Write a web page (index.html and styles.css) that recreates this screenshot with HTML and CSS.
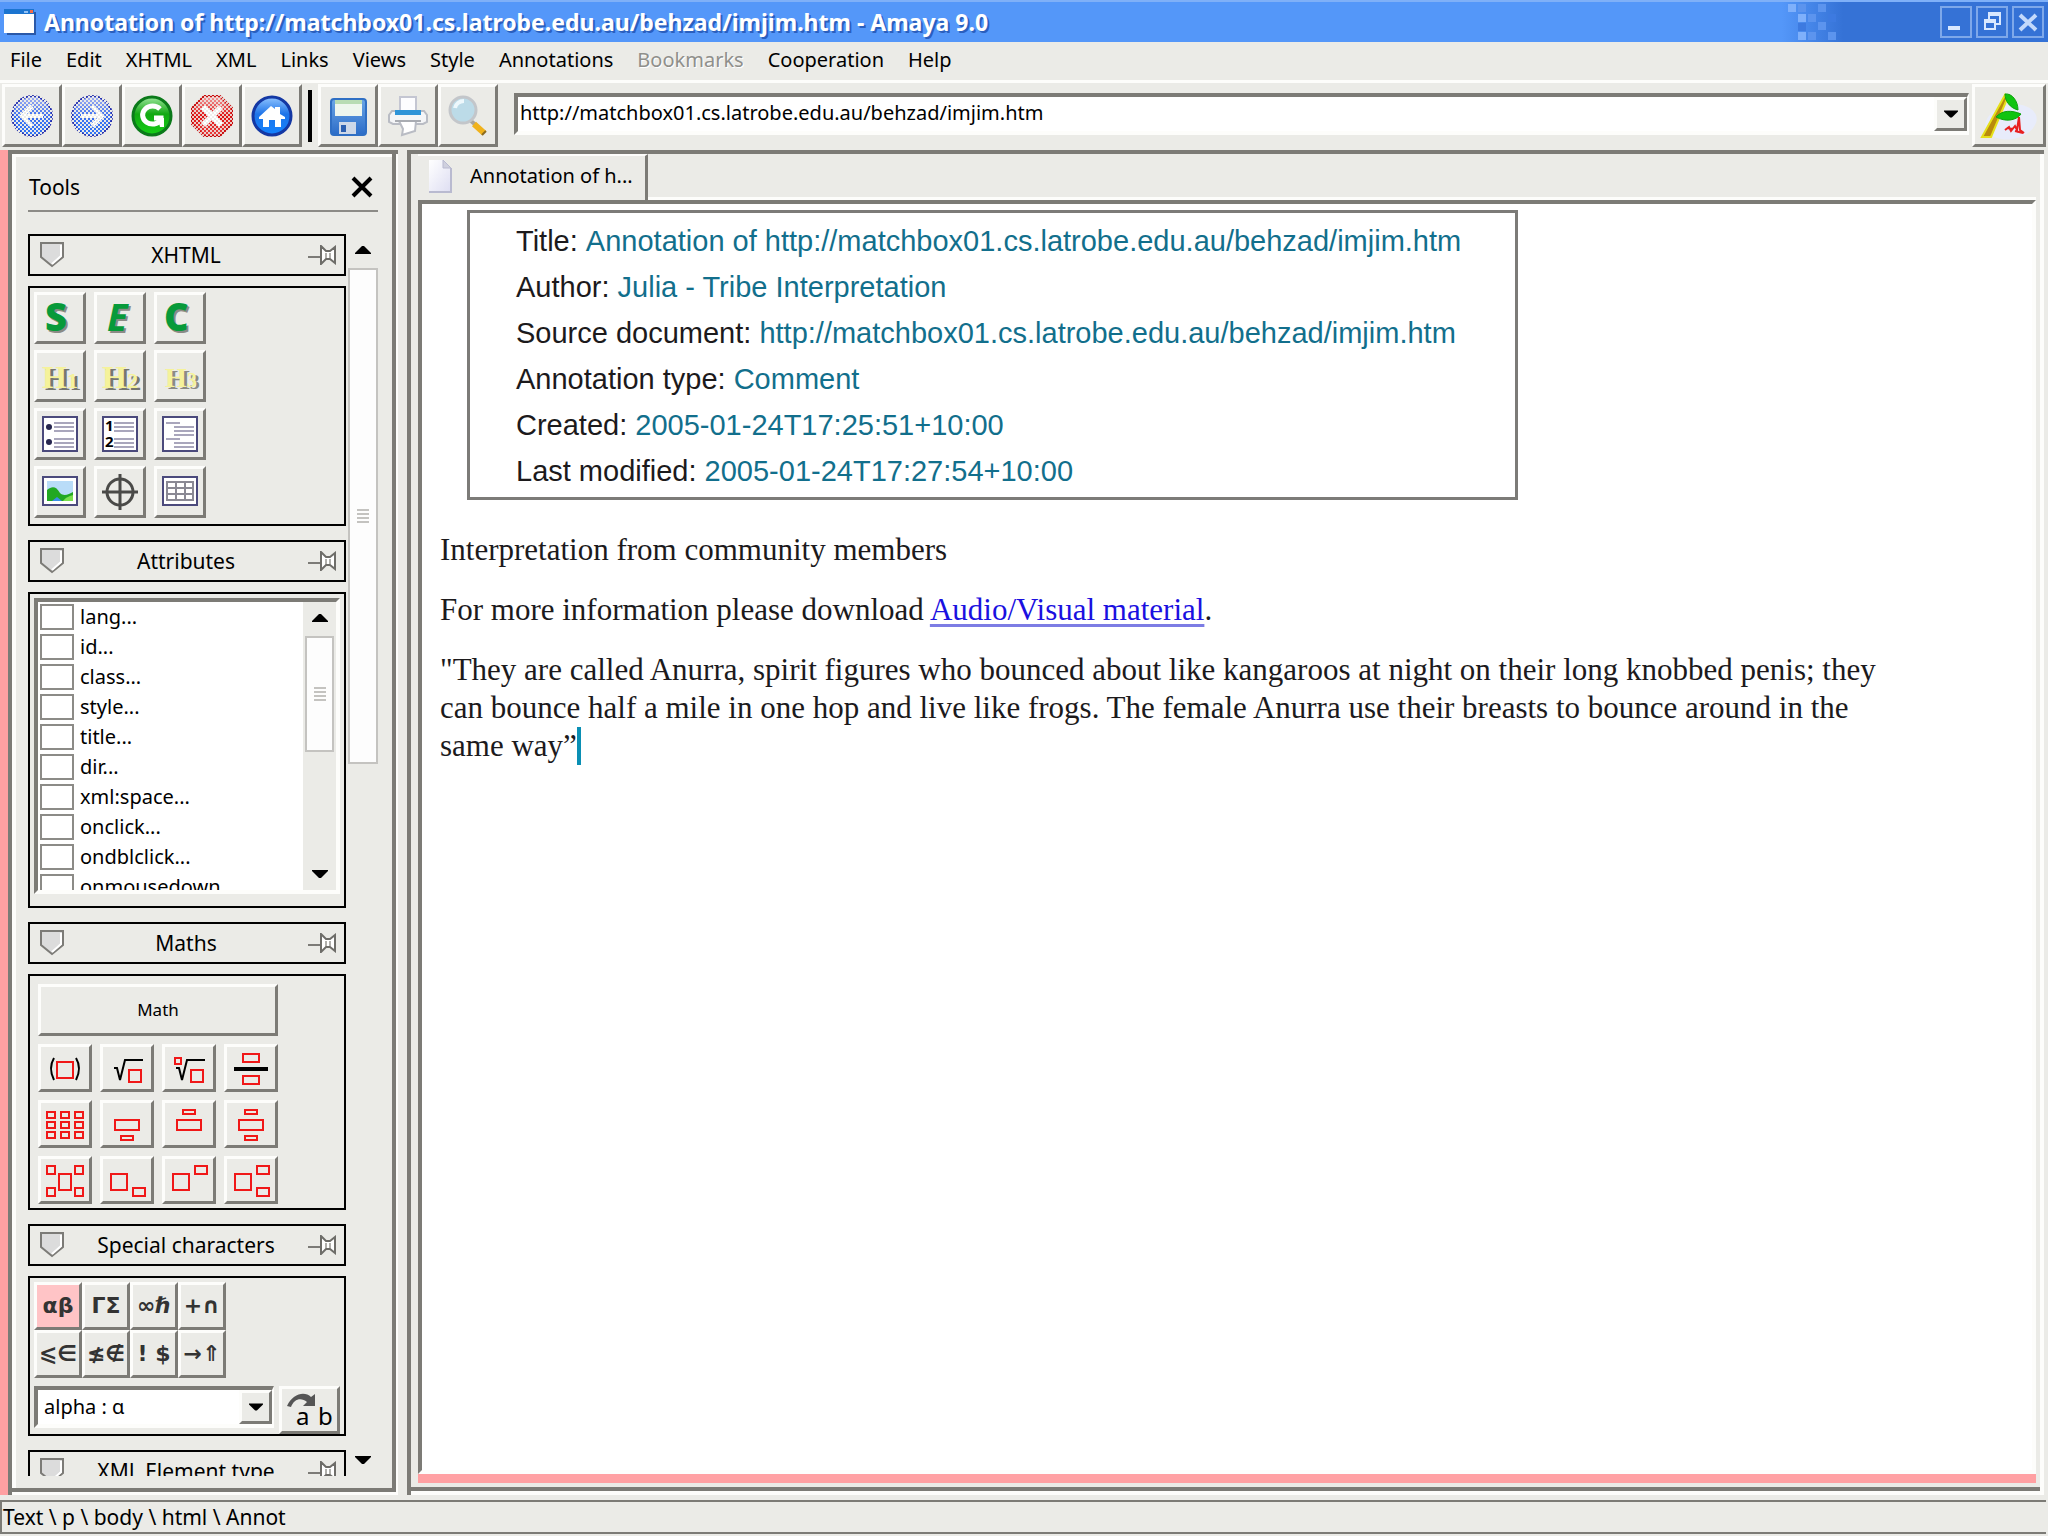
FILE: index.html
```html
<!DOCTYPE html>
<html lang="en">
<head>
<meta charset="utf-8">
<title>Annotation of http://matchbox01.cs.latrobe.edu.au/behzad/imjim.htm - Amaya 9.0</title>
<link rel="stylesheet" href="styles.css">
</head>
<body>
<svg class="defs" width="0" height="0" aria-hidden="true">
  <defs>
    <linearGradient id="blue" x1="0" y1="0" x2="0" y2="1"><stop offset="0" stop-color="#8fc4ff"/><stop offset=".45" stop-color="#1f74e8"/><stop offset="1" stop-color="#1283ff"/></linearGradient>
    <linearGradient id="green" x1="0" y1="0" x2="0" y2="1"><stop offset="0" stop-color="#9be69b"/><stop offset=".45" stop-color="#12a812"/><stop offset="1" stop-color="#16d016"/></linearGradient>
    <linearGradient id="palered" x1="0" y1="0" x2="0" y2="1"><stop offset="0" stop-color="#f2a3a3"/><stop offset=".5" stop-color="#e01010"/><stop offset="1" stop-color="#e84040"/></linearGradient>
    <linearGradient id="paleblue" x1="0" y1="0" x2="0" y2="1"><stop offset="0" stop-color="#a9b4f0"/><stop offset=".5" stop-color="#3d6ff0"/><stop offset="1" stop-color="#2f74f4"/></linearGradient>
    <linearGradient id="disk" x1="0" y1="0" x2="0" y2="1"><stop offset="0" stop-color="#6ba6e6"/><stop offset="1" stop-color="#2b6cc8"/></linearGradient>
    <linearGradient id="sheet" x1="0" y1="0" x2="1" y2="1"><stop offset="0" stop-color="#ffffff"/><stop offset="1" stop-color="#dedef2"/></linearGradient>
    <pattern id="dither" width="4" height="4" patternUnits="userSpaceOnUse"><rect width="2" height="2" fill="#ebebe7"/><rect x="2" y="2" width="2" height="2" fill="#ebebe7"/></pattern>
    <symbol id="fold" viewBox="0 0 24 26"><path d="M1 1h22v14L12 24 1 15z" fill="#dcdcdc" stroke="#7c7b77" stroke-width="2"/><path d="M21 3v11l-9 8" fill="none" stroke="#fff" stroke-width="2"/></symbol>
    <symbol id="pin" viewBox="0 0 28 20"><path d="M0 12h13" stroke="#7c7b77" stroke-width="2"/><path d="M13 1l5 5h4l5-4v16l-5-4h-4l-5 5z" fill="#fff" stroke="#6e6d69" stroke-width="2"/><path d="M18 8v5M22 8v5" stroke="#b0afab" stroke-width="2"/></symbol>
    <symbol id="up" viewBox="0 0 16 8"><path d="M0 8V7L7 0h2l7 7v1z" fill="#000"/></symbol>
    <symbol id="down" viewBox="0 0 16 8"><path d="M0 0v1l7 7h2l7-7V0z" fill="#000"/></symbol>
  </defs>
</svg>

<div class="window">
  <header class="titlebar">
    <svg class="app-icon" width="32" height="26" viewBox="0 0 32 26" aria-hidden="true"><path d="M3 25h28V3" fill="none" stroke="#2a58a8" stroke-width="2"/><rect width="30" height="24" fill="#fff"/><rect width="30" height="5" fill="#1b74d0"/><rect x="26" y="1" width="3" height="3" fill="#f26a4a"/><rect x="20" y="2" width="4" height="2" fill="#8fc0f4"/></svg>
    <h1 class="title">Annotation of http://matchbox01.cs.latrobe.edu.au/behzad/imjim.htm - Amaya 9.0</h1>
    <svg class="pixels" width="54" height="40" viewBox="0 0 54 40" aria-hidden="true"><g fill="#7fb0fb"><path d="M0 2h8v8H0zM10 12h8v8h-8zM10 30h8v8h-8z"/></g><g fill="#5c94ee"><path d="M10 2h8v8h-8zM20 12h8v8h-8zM30 20h8v8h-8zM20 30h8v8h-8zM40 30h8v8h-8zM30 2h8v8h-8z"/></g><path d="M40 12h8v8h-8zM10 21h8v8h-8z" fill="#3d7ae0"/></svg>
    <div class="window-buttons">
      <button type="button" aria-label="Minimize"><svg width="28" height="28" viewBox="0 0 28 28"><path d="M6 20h12" stroke="#d9e8ff" stroke-width="4"/></svg></button>
      <button type="button" aria-label="Restore"><svg width="28" height="28" viewBox="0 0 28 28"><path d="M11 11V6h11v10h-4" fill="none" stroke="#d9e8ff" stroke-width="2"/><path d="M10 6h13" stroke="#d9e8ff" stroke-width="4"/><path d="M7 12h10v9H7z" fill="none" stroke="#d9e8ff" stroke-width="2"/><path d="M6 13h12" stroke="#d9e8ff" stroke-width="4"/></svg></button>
      <button type="button" aria-label="Close"><svg width="28" height="28" viewBox="0 0 28 28"><path d="M6 7l16 15M22 7L6 22" stroke="#c3d9fb" stroke-width="4"/></svg></button>
    </div>
  </header>

  <nav class="menubar" aria-label="Main menu">
    <button type="button">File</button><button type="button">Edit</button><button type="button">XHTML</button><button type="button">XML</button><button type="button">Links</button><button type="button">Views</button><button type="button">Style</button><button type="button">Annotations</button><button type="button" disabled>Bookmarks</button><button type="button">Cooperation</button><button type="button">Help</button>
  </nav>

  <div class="toolbar">
    <div class="tool-group">
      <button type="button" class="raised" aria-label="Back"><svg width="44" height="44" viewBox="0 0 44 44"><circle cx="22" cy="22" r="20" fill="url(#paleblue)" stroke="#2b35b0" stroke-width="2"/><path d="M33 22H13M22 12L12 22l10 10" fill="none" stroke="#fff" stroke-width="4"/><rect width="44" height="44" fill="url(#dither)"/></svg></button>
      <button type="button" class="raised" aria-label="Forward"><svg width="44" height="44" viewBox="0 0 44 44"><circle cx="22" cy="22" r="20" fill="url(#paleblue)" stroke="#2b35b0" stroke-width="2"/><path d="M11 22h20M22 12l10 10-10 10" fill="none" stroke="#fff" stroke-width="4"/><rect width="44" height="44" fill="url(#dither)"/></svg></button>
      <button type="button" class="raised" aria-label="Reload"><svg width="44" height="44" viewBox="0 0 44 44"><circle cx="22" cy="22" r="19" fill="url(#green)" stroke="#0b7a1a" stroke-width="3"/><path d="M30 15a10 9 0 1 0 1 11v-2h-7" fill="none" stroke="#fff" stroke-width="5"/><path d="M28 24h6v9h-4z" fill="#fff"/></svg></button>
      <button type="button" class="raised" aria-label="Stop"><svg width="44" height="44" viewBox="0 0 44 44"><path d="M14 2h16l12 12v16L30 42H14L2 30V14z" fill="url(#palered)" stroke="#c80d0d" stroke-width="2"/><path d="M13 13l18 18M31 13L13 31" stroke="#fff" stroke-width="6"/><rect width="44" height="44" fill="url(#dither)" opacity=".85"/></svg></button>
      <button type="button" class="raised" aria-label="Home"><svg width="44" height="44" viewBox="0 0 44 44"><circle cx="22" cy="22" r="19" fill="url(#blue)" stroke="#1438a4" stroke-width="3"/><path d="M9 23L21 12l4 3v-2h5v7l5 3v2h-4v8h-6v-7h-6v7h-6v-8H9z" fill="#fff"/></svg></button>
    </div>
    <span class="separator"></span>
    <div class="tool-group">
      <button type="button" class="raised" aria-label="Save"><svg width="44" height="44" viewBox="0 0 44 44"><rect x="5" y="5" width="35" height="36" rx="3" fill="url(#disk)" stroke="#2f6fc4" stroke-width="2"/><path d="M9 6h27v16H9z" fill="#eef6ee"/><path d="M9 6h27v4H9z" fill="#b8dcb4"/><path d="M13 28h17v12H13z" fill="#cdd8e8"/><path d="M15 31h5v7h-5z" fill="#2b5fb0"/></svg></button>
      <button type="button" class="raised" aria-label="Print"><svg width="44" height="44" viewBox="0 0 44 44"><path d="M14 3h16v16H14z" fill="#fdfdff" stroke="#c4c6d2" stroke-width="2"/><path d="M6 17h32l3 4v7l-4 2H7l-4-2v-7z" fill="#f4f5f7" stroke="#b9bcc4" stroke-width="2"/><path d="M9 16h26v5H9z" fill="#2f94d8"/><path d="M13 27h17l-1 10-13 4 1-6z" fill="#fff" stroke="#b9bcc4" stroke-width="2"/><path d="M9 27h26" stroke="#a9acb2" stroke-width="2"/></svg></button>
      <button type="button" class="raised" aria-label="Find"><svg width="44" height="44" viewBox="0 0 44 44"><path d="M25 27l6 5" stroke="#a8a49c" stroke-width="4"/><path d="M28 30l10 9" stroke="#f0b21c" stroke-width="6"/><path d="M36 41l4-4" stroke="#8a6a20" stroke-width="2"/><circle cx="17" cy="16" r="13" fill="#bcdbe8" stroke="#c3c6ca" stroke-width="3"/><path d="M9 14a9 8 0 0 1 9-7" fill="none" stroke="#eef8fc" stroke-width="4"/></svg></button>
    </div>
    <div class="combo address">
      <input type="text" aria-label="Address" value="http://matchbox01.cs.latrobe.edu.au/behzad/imjim.htm">
      <button type="button" class="raised drop" aria-label="Show addresses"><svg width="14" height="8"><use href="#down"/></svg></button>
    </div>
    <button type="button" class="raised amaya" aria-label="Amaya"><svg width="60" height="52" viewBox="0 0 60 52"><ellipse cx="32" cy="32" rx="26" ry="17" fill="#e8ecfb" transform="rotate(-12 32 32)"/><path d="M26 5L3 47h9L28 9z" fill="#b98a0c" stroke="#e6e01a" stroke-width="2"/><path d="M26 4c7-1 13 7 13 16C31 18 26 11 26 4zM17 27c6-7 16-7 25-3-5 7-16 8-25 3z" fill="#10c410" stroke="#0da00d"/><path d="M26 40l4-3 2 4 4-5 2 4 2-13 1 13 4 3M28 38l6 1M36 41l8 2" fill="none" stroke="#e82020" stroke-width="2"/></svg></button>
  </div>

  <div class="workspace">
    <aside class="tools">
      <div class="tools-head"><h2>Tools</h2><button type="button" aria-label="Close tools"><svg width="22" height="22" viewBox="0 0 22 22"><path d="M2 2l18 18M20 2L2 20" stroke="#000" stroke-width="4"/></svg></button></div>
      <div class="tools-body">
        <div class="panels">
          <section class="panel">
            <header class="panel-head"><button type="button" aria-label="Fold XHTML"><svg width="24" height="26"><use href="#fold"/></svg></button><h3>XHTML</h3><button type="button" aria-label="Detach XHTML"><svg width="28" height="20"><use href="#pin"/></svg></button></header>
            <div class="panel-box xhtml">
              <button type="button" class="raised" aria-label="Strong"><svg width="44" height="44" viewBox="0 0 44 44" class="glyph heavy"><text x="9" y="37" fill="#8b8b86">S</text><text x="7" y="35" fill="#079a3a">S</text></svg></button>
              <button type="button" class="raised" aria-label="Emphasis"><svg width="44" height="44" viewBox="0 0 44 44" class="glyph heavy slant"><text x="11" y="37" fill="#8b8b86">E</text><text x="9" y="35" fill="#079a3a">E</text></svg></button>
              <button type="button" class="raised" aria-label="Code"><svg width="44" height="44" viewBox="0 0 44 44" class="glyph heavy"><text x="8" y="37" fill="#8b8b86">C</text><text x="6" y="35" fill="#079a3a">C</text></svg></button>
              <button type="button" class="raised" aria-label="Heading 1"><svg width="44" height="44" viewBox="0 0 44 44" class="glyph head"><text x="7" y="36" fill="#77776f">H<tspan class="sub">1</tspan></text><text x="4" y="34" fill="#f5f29a">H<tspan class="sub">1</tspan></text></svg></button>
              <button type="button" class="raised" aria-label="Heading 2"><svg width="44" height="44" viewBox="0 0 44 44" class="glyph head"><text x="7" y="36" fill="#77776f">H<tspan class="sub">2</tspan></text><text x="4" y="34" fill="#f5f29a">H<tspan class="sub">2</tspan></text></svg></button>
              <button type="button" class="raised" aria-label="Heading 3"><svg width="44" height="44" viewBox="0 0 44 44" class="glyph head small"><text x="10" y="35" fill="#8b8b84">H<tspan class="sub">3</tspan></text><text x="7" y="33" fill="#f5f29a">H<tspan class="sub">3</tspan></text></svg></button>
              <button type="button" class="raised" aria-label="Bulleted list"><svg width="44" height="44" viewBox="0 0 44 44"><path d="M5 5h34v34H5z" fill="#fff" stroke="#4b4a7c" stroke-width="2"/><path d="M16 11h20M16 15h20M16 19h20M16 27h20M16 31h20M16 35h20" stroke="#a9a6bc" stroke-width="2"/><circle cx="11" cy="15" r="3" fill="#26264e"/><circle cx="11" cy="30" r="3" fill="#26264e"/></svg></button>
              <button type="button" class="raised" aria-label="Numbered list"><svg width="44" height="44" viewBox="0 0 44 44" class="glyph tiny"><path d="M5 5h34v34H5z" fill="#fff" stroke="#4b4a7c" stroke-width="2"/><path d="M16 11h20M16 15h20M16 19h20M16 27h20M16 31h20M16 35h20" stroke="#a9a6bc" stroke-width="2"/><text x="7" y="19">1</text><text x="7" y="35">2</text></svg></button>
              <button type="button" class="raised" aria-label="Definition list"><svg width="44" height="44" viewBox="0 0 44 44"><path d="M5 5h34v34H5z" fill="#fff" stroke="#4b4a7c" stroke-width="2"/><path d="M8 11h14M16 15h20M16 19h20M16 23h20M8 27h14M16 31h20M16 35h20" stroke="#a9a6bc" stroke-width="2"/></svg></button>
              <button type="button" class="raised" aria-label="Image"><svg width="44" height="44" viewBox="0 0 44 44"><path d="M5 7h34v28H5z" fill="#fff" stroke="#4b4a7c" stroke-width="2"/><path d="M9 11h26v20H9z" fill="#b9dcf8"/><path d="M9 31V20c5-4 9-4 13 3 4 4 9 1 13-1v9z" fill="#22a822"/><path d="M14 31l5-4 5 4z" fill="#3a8fe8"/><path d="M25 31c3-4 7-5 10-6v6z" fill="#7be04e"/></svg></button>
              <button type="button" class="raised" aria-label="Target"><svg width="44" height="44" viewBox="0 0 44 44"><circle cx="22" cy="22" r="13" fill="none" stroke="#4a4a48" stroke-width="3"/><path d="M22 4v36M4 22h36" stroke="#4a4a48" stroke-width="3"/></svg></button>
              <button type="button" class="raised" aria-label="Table"><svg width="44" height="44" viewBox="0 0 44 44"><path d="M5 7h34v28H5z" fill="#fff" stroke="#4b4a7c" stroke-width="2"/><path d="M9 12h26v18H9zM9 18h26M9 24h26M18 12v18M27 12v18" fill="none" stroke="#8a8994" stroke-width="2"/></svg></button>
            </div>
          </section>

          <section class="panel">
            <header class="panel-head"><button type="button" aria-label="Fold Attributes"><svg width="24" height="26"><use href="#fold"/></svg></button><h3>Attributes</h3><button type="button" aria-label="Detach Attributes"><svg width="28" height="20"><use href="#pin"/></svg></button></header>
            <div class="panel-box attributes">
              <div class="attr-frame">
                <div class="attr-list">
                  <label><input type="checkbox">lang...</label>
                  <label><input type="checkbox">id...</label>
                  <label><input type="checkbox">class...</label>
                  <label><input type="checkbox">style...</label>
                  <label><input type="checkbox">title...</label>
                  <label><input type="checkbox">dir...</label>
                  <label><input type="checkbox">xml:space...</label>
                  <label><input type="checkbox">onclick...</label>
                  <label><input type="checkbox">ondblclick...</label>
                  <label><input type="checkbox">onmousedown</label>
                </div>
                <div class="scrollbar">
                  <svg width="16" height="8"><use href="#up"/></svg>
                  <div class="track"><div class="thumb short"><span class="grip"></span></div></div>
                  <svg width="16" height="8"><use href="#down"/></svg>
                </div>
              </div>
            </div>
          </section>

          <section class="panel">
            <header class="panel-head"><button type="button" aria-label="Fold Maths"><svg width="24" height="26"><use href="#fold"/></svg></button><h3>Maths</h3><button type="button" aria-label="Detach Maths"><svg width="28" height="20"><use href="#pin"/></svg></button></header>
            <div class="panel-box maths">
              <button type="button" class="raised wide">Math</button>
              <button type="button" class="raised" aria-label="Parentheses"><svg width="46" height="40" viewBox="0 0 46 40"><path d="M12 10q-6 10 0 22M34 10q6 10 0 22" fill="none" stroke="#000" stroke-width="2"/><path d="M15 14h16v16H15z"/></svg></button>
              <button type="button" class="raised" aria-label="Square root"><svg width="46" height="40" viewBox="0 0 46 40"><path d="M10 20h3l3 12 5-20h18" fill="none" stroke="#000" stroke-width="2"/><path d="M25 22h12v12H25z"/></svg></button>
              <button type="button" class="raised" aria-label="Root"><svg width="46" height="40" viewBox="0 0 46 40"><path d="M10 20h3l3 12 5-20h18" fill="none" stroke="#000" stroke-width="2"/><path d="M25 22h12v12H25zM9 10h6v6H9z"/></svg></button>
              <button type="button" class="raised" aria-label="Fraction"><svg width="46" height="40" viewBox="0 0 46 40"><path d="M6 21h34" stroke="#000" stroke-width="4"/><path d="M15 6h16v8H15zM15 28h16v8H15z"/></svg></button>
              <button type="button" class="raised" aria-label="Matrix"><svg width="46" height="40" viewBox="0 0 46 40"><path d="M5 8h8v6H5zM19 8h8v6h-8zM33 8h8v6h-8zM5 18h8v6H5zM19 18h8v6h-8zM33 18h8v6h-8zM5 28h8v6H5zM19 28h8v6h-8zM33 28h8v6h-8z"/></svg></button>
              <button type="button" class="raised" aria-label="Under"><svg width="46" height="40" viewBox="0 0 46 40"><path d="M11 16h24v10H11zM17 32h12v4H17z"/></svg></button>
              <button type="button" class="raised" aria-label="Over"><svg width="46" height="40" viewBox="0 0 46 40"><path d="M11 16h24v10H11zM17 6h12v4H17z"/></svg></button>
              <button type="button" class="raised" aria-label="Under and over"><svg width="46" height="40" viewBox="0 0 46 40"><path d="M11 16h24v10H11zM17 6h12v4H17zM17 32h12v4H17z"/></svg></button>
              <button type="button" class="raised" aria-label="Multiscripts"><svg width="46" height="40" viewBox="0 0 46 40"><path d="M17 14h12v16H17zM5 6h8v8H5zM33 6h8v8h-8zM5 28h8v8H5zM33 28h8v8h-8z"/></svg></button>
              <button type="button" class="raised" aria-label="Subscript"><svg width="46" height="40" viewBox="0 0 46 40"><path d="M7 14h16v16H7zM29 28h12v8H29z"/></svg></button>
              <button type="button" class="raised" aria-label="Superscript"><svg width="46" height="40" viewBox="0 0 46 40"><path d="M7 14h16v16H7zM29 6h12v8H29z"/></svg></button>
              <button type="button" class="raised" aria-label="Subscript and superscript"><svg width="46" height="40" viewBox="0 0 46 40"><path d="M7 14h16v16H7zM29 6h12v8H29zM29 28h12v8H29z"/></svg></button>
            </div>
          </section>

          <section class="panel">
            <header class="panel-head"><button type="button" aria-label="Fold Special characters"><svg width="24" height="26"><use href="#fold"/></svg></button><h3>Special characters</h3><button type="button" aria-label="Detach Special characters"><svg width="28" height="20"><use href="#pin"/></svg></button></header>
            <div class="panel-box special">
              <div class="char-grid">
                <button type="button" class="raised chosen">αβ</button><button type="button" class="raised">ΓΣ</button><button type="button" class="raised">∞ℏ</button><button type="button" class="raised">+∩</button>
                <button type="button" class="raised">⩽∈</button><button type="button" class="raised">≰∉</button><button type="button" class="raised">! $</button><button type="button" class="raised">→⇑</button>
              </div>
              <div class="char-row">
                <div class="combo">
                  <select aria-label="Character"><option>alpha : α</option></select>
                  <span class="raised drop" aria-hidden="true"><svg width="14" height="8"><use href="#down"/></svg></span>
                </div>
                <button type="button" class="raised" aria-label="Change character"><svg width="54" height="42" viewBox="0 0 54 42" class="glyph plain"><path d="M4 17C10 4 22 2 28 8l4-3v12H20l4-4C18 8 11 10 8 18z" fill="#555"/><text x="13" y="36">a</text><text x="35" y="36">b</text></svg></button>
              </div>
            </div>
          </section>

          <section class="panel">
            <header class="panel-head"><button type="button" aria-label="Fold XML Element type"><svg width="24" height="26"><use href="#fold"/></svg></button><h3>XML Element type</h3><button type="button" aria-label="Detach XML Element type"><svg width="28" height="20"><use href="#pin"/></svg></button></header>
          </section>
        </div>
        <div class="scrollbar">
          <svg width="16" height="8"><use href="#up"/></svg>
          <div class="track"><div class="thumb long"><span class="grip"></span></div></div>
          <svg width="16" height="8"><use href="#down"/></svg>
        </div>
      </div>
    </aside>

    <main class="document">
      <div class="tabs">
        <button type="button" class="tab"><svg width="24" height="34" viewBox="0 0 24 34"><path d="M1 1h15l7 8v24H1z" fill="url(#sheet)"/><path d="M23 9v24H1" fill="none" stroke="#b9bad0" stroke-width="2"/><path d="M15 1v8h8z" fill="#cfd0de" stroke="#b9bad0"/></svg>Annotation of h...</button>
        <div class="tab-rest"></div>
      </div>
      <article class="page">
        <dl class="meta">
          <div><dt>Title:</dt> <dd>Annotation of http://matchbox01.cs.latrobe.edu.au/behzad/imjim.htm</dd></div>
          <div><dt>Author:</dt> <dd>Julia - Tribe Interpretation</dd></div>
          <div><dt>Source document:</dt> <dd>http://matchbox01.cs.latrobe.edu.au/behzad/imjim.htm</dd></div>
          <div><dt>Annotation type:</dt> <dd>Comment</dd></div>
          <div><dt>Created:</dt> <dd>2005-01-24T17:25:51+10:00</dd></div>
          <div><dt>Last modified:</dt> <dd>2005-01-24T17:27:54+10:00</dd></div>
        </dl>
        <p>Interpretation from community members</p>
        <p>For more information please download <a href="#">Audio/Visual material</a>.</p>
        <p>"They are called Anurra, spirit figures who bounced about like kangaroos at night on their long knobbed penis; they can bounce half a mile in one hop and live like frogs. The female Anurra use their breasts to bounce around in the same way”<span class="caret"></span></p>
      </article>
      <div class="save-line"></div>
    </main>
  </div>

  <footer class="status">Text \ p \ body \ html \ Annot</footer>
</div>
</body>
</html>
```
FILE: styles.css
```css
:root {
  --face: #ebebe7;
  --dark: #7c7b76;
  --light: #fdfdfb;
  --pink: #ffa0a2;
}

* { box-sizing: border-box; }

body {
  margin: 0;
  background: var(--face);
  color: #000;
  font: 20px/28px "Noto Sans", "Open Sans", sans-serif;
}

button, input, select { font: inherit; color: inherit; margin: 0; }
button { padding: 0; border: 0; background: none; }
svg { display: block; flex: none; }
.defs { position: absolute; }
h1, h2, h3, p, dl, dd { margin: 0; font-weight: normal; font-size: inherit; }

.window { display: flex; flex-direction: column; height: 100vh; }

/* Title bar */
.titlebar {
  display: flex;
  align-items: center;
  flex: none;
  height: 42px;
  padding: 0 4px;
  background: linear-gradient(90deg, #5497f9 0, #5497f9 87%, #3572d6 90%);
  border-top: 2px solid #7fb0f8;
  color: #fff;
}
.title {
  flex: 1;
  margin-left: 8px;
  font-size: 23px;
  font-weight: bold;
  text-shadow: 2px 2px 0 #2a5fbe;
  white-space: nowrap;
}
.pixels { margin-right: 98px; }
.window-buttons { display: flex; gap: 4px; }
.window-buttons button { border: 2px solid #7ea8ea; }

/* Menu bar */
.menubar {
  display: flex;
  flex: none;
  gap: 24px;
  height: 41px;
  padding: 0 10px 2px;
  border-bottom: 3px solid var(--light);
}
.menubar button:disabled { color: #8f8f8b; text-shadow: 1px 1px 0 #fff; }

/* Toolbar */
.raised {
  display: flex;
  align-items: center;
  justify-content: center;
  border: solid;
  border-width: 3px;
  border-color: var(--light) var(--dark) var(--dark) var(--light);
  background: var(--face);
}
.toolbar {
  display: flex;
  flex: none;
  align-items: center;
  height: 67px;
  padding: 0 2px 2px;
}
.tool-group { display: flex; }
.tool-group .raised { width: 60px; height: 63px; }
.separator { width: 4px; height: 52px; margin: 0 6px; background: #000; }
.combo {
  display: flex;
  position: relative;
  flex: 1;
  height: 42px;
  border: 4px solid;
  border-color: var(--dark) var(--light) var(--light) var(--dark);
  border-right-width: 2px;
  background: #fff;
}
.combo input, .combo select {
  flex: 1;
  min-width: 0;
  padding: 0 2px 2px;
  border: 0;
  background: none;
  appearance: none;
}
.combo .drop { width: 33px; height: 34px; }
.combo select { padding: 0 6px; }
.combo select + .drop { position: absolute; top: 0; right: 0; pointer-events: none; }
.address { margin: 0 3px 4px 16px; }
.amaya { width: 74px; height: 63px; }

/* Workspace */
.workspace {
  display: flex;
  flex: 1;
  gap: 9px;
  min-height: 0;
  padding: 0 4px 0 0;
}
.tools {
  display: flex;
  flex-direction: column;
  flex: none;
  width: 398px;
  border-left: 8px solid var(--pink);
  padding: 0 16px 14px 12px;
  box-shadow: inset 4px 4px var(--dark), inset -2px -3px var(--light), inset -6px -7px var(--dark), inset 8px 7px var(--light);
}
.tools-head {
  display: flex;
  align-items: center;
  justify-content: space-between;
  height: 62px;
  margin: 0 4px 22px 8px;
  padding: 14px 5px 0 1px;
  border-bottom: 2px solid #8c8b87;
  font-size: 21px;
}
.tools-body { display: flex; flex: 1; gap: 2px; min-height: 0; margin-bottom: 5px; padding: 0 4px 0 8px; }
.panels { flex: 1; overflow: hidden; }
.panel { margin-bottom: 14px; }
.panel-head {
  display: flex;
  align-items: center;
  justify-content: space-between;
  height: 42px;
  margin-bottom: 10px;
  padding: 0 8px 0 10px;
  border: 2px solid #000;
  font-size: 21px;
}
.panel-box { border: 2px solid #000; }

.xhtml { display: grid; grid-template-columns: repeat(3, 52px); gap: 6px 8px; padding: 4px 4px 6px; }
.xhtml .raised { height: 52px; }
.glyph { font-weight: bold; overflow: visible; }
.heavy { font-family: "Open Sans", sans-serif; font-size: 38px; font-weight: 800; }
.slant { font-style: italic; font-weight: 700; }
.head { font-family: "Liberation Serif", serif; font-size: 32px; }
.head .sub { font-size: 22px; }
.head.small { font-size: 28px; }
.head.small .sub { font-size: 20px; }
.tiny { font-size: 15px; }
.plain { font-size: 24px; font-weight: normal; }

.attributes { padding: 4px 4px 12px; }
.attr-frame {
  display: flex;
  height: 296px;
  border: 4px solid;
  border-color: var(--dark) var(--light) var(--light) var(--dark);
  background: #fff;
}
.attr-list { display: flex; flex-direction: column; flex: 1; gap: 4px; padding: 2px; overflow: hidden; }
.attr-list label { display: flex; flex: none; align-items: center; gap: 6px; height: 26px; }
.attr-list input { width: 34px; height: 26px; border: 2px solid #8c8b87; background: #fff; appearance: none; }

.scrollbar {
  display: flex;
  flex-direction: column;
  align-items: center;
  flex: none;
  width: 30px;
  padding: 12px 0;
  background: var(--face);
}
.attr-frame .scrollbar { width: 33px; padding: 12px 2px; }
.scrollbar .track { flex: 1; align-self: stretch; padding: 14px 0; }
.thumb {
  display: flex;
  align-items: center;
  justify-content: center;
  border: 2px solid #c4c3c0;
  background: #fdfdfd;
}
.thumb.short { height: 116px; }
.thumb.long { height: 496px; }
.grip { width: 12px; height: 14px; background: repeating-linear-gradient(#c4c3c0 0 2px, transparent 2px 4px); }

.maths { display: grid; grid-template-columns: repeat(4, 54px); gap: 8px; padding: 8px 8px 4px; }
.maths .raised { height: 48px; }
.maths .wide { grid-column: 1 / -1; height: 52px; font-size: 17px; }
.maths path { stroke: #f01818; stroke-width: 2; fill: none; }
.maths path[stroke] { stroke: #000; }
.maths path[stroke-width="4"] { stroke-width: 4; }

.special { padding: 4px 4px 0; }
.char-grid { display: grid; grid-template-columns: repeat(4, 48px); margin-bottom: 8px; font-family: "DejaVu Sans", sans-serif; font-size: 22px; font-weight: bold; color: #333; }
.char-grid .raised { height: 48px; }
.char-grid .chosen { background: #ffc4c6; }
.char-row { display: flex; gap: 5px; }
.char-row > .raised { width: 61px; height: 48px; }

/* Document */
.document {
  display: flex;
  flex-direction: column;
  flex: 1;
  min-width: 0;
  padding: 4px 8px 12px 11px;
  box-shadow: inset 4px 4px var(--dark), inset -4px -4px var(--light), inset -4px -8px var(--dark), inset -4px 0 var(--dark);
}
.tabs { display: flex; flex: none; height: 46px; }
.tab {
  display: flex;
  gap: 18px;
  padding: 3px 12px 0 10px;
  border-top: 2px solid var(--light);
  border-right: 3px solid var(--dark);
  line-height: 34px;
}
.tab-rest { flex: 1; border-bottom: 3px solid var(--light); }
.page {
  flex: 1;
  min-height: 0;
  padding: 6px 134px 0 18px;
  border: 4px solid;
  border-color: var(--dark) var(--light) var(--light) var(--dark);
  background: #fff;
  color: #1c1a1c;
  font: 31px/38px "Liberation Serif", serif;
}
.save-line { flex: none; height: 9px; background: var(--pink); }
.meta {
  width: 1051px;
  max-width: 100%;
  margin: 0 0 31px 27px;
  padding: 5px 0 3px 46px;
  border: 3px solid #7c7b78;
  font: 29px/46px "Liberation Sans", sans-serif;
}
.meta dt, .meta dd { display: inline; }
.meta dd { color: #126f8c; }
.page p { margin-bottom: 22px; }
.page a {
  color: #1a10e0;
  text-decoration: underline;
  text-decoration-color: #7c7ce4;
  text-decoration-thickness: 3px;
  text-underline-offset: 4px;
}
.caret { display: inline-block; width: 4px; height: 38px; background: #0a8fb4; vertical-align: bottom; }

/* Status bar */
.status {
  flex: none;
  height: 34px;
  margin: 5px 2px 2px 0;
  padding: 1px;
  border: solid var(--dark);
  border-width: 2px 0 2px 2px;
  font-size: 21px;
}
```
